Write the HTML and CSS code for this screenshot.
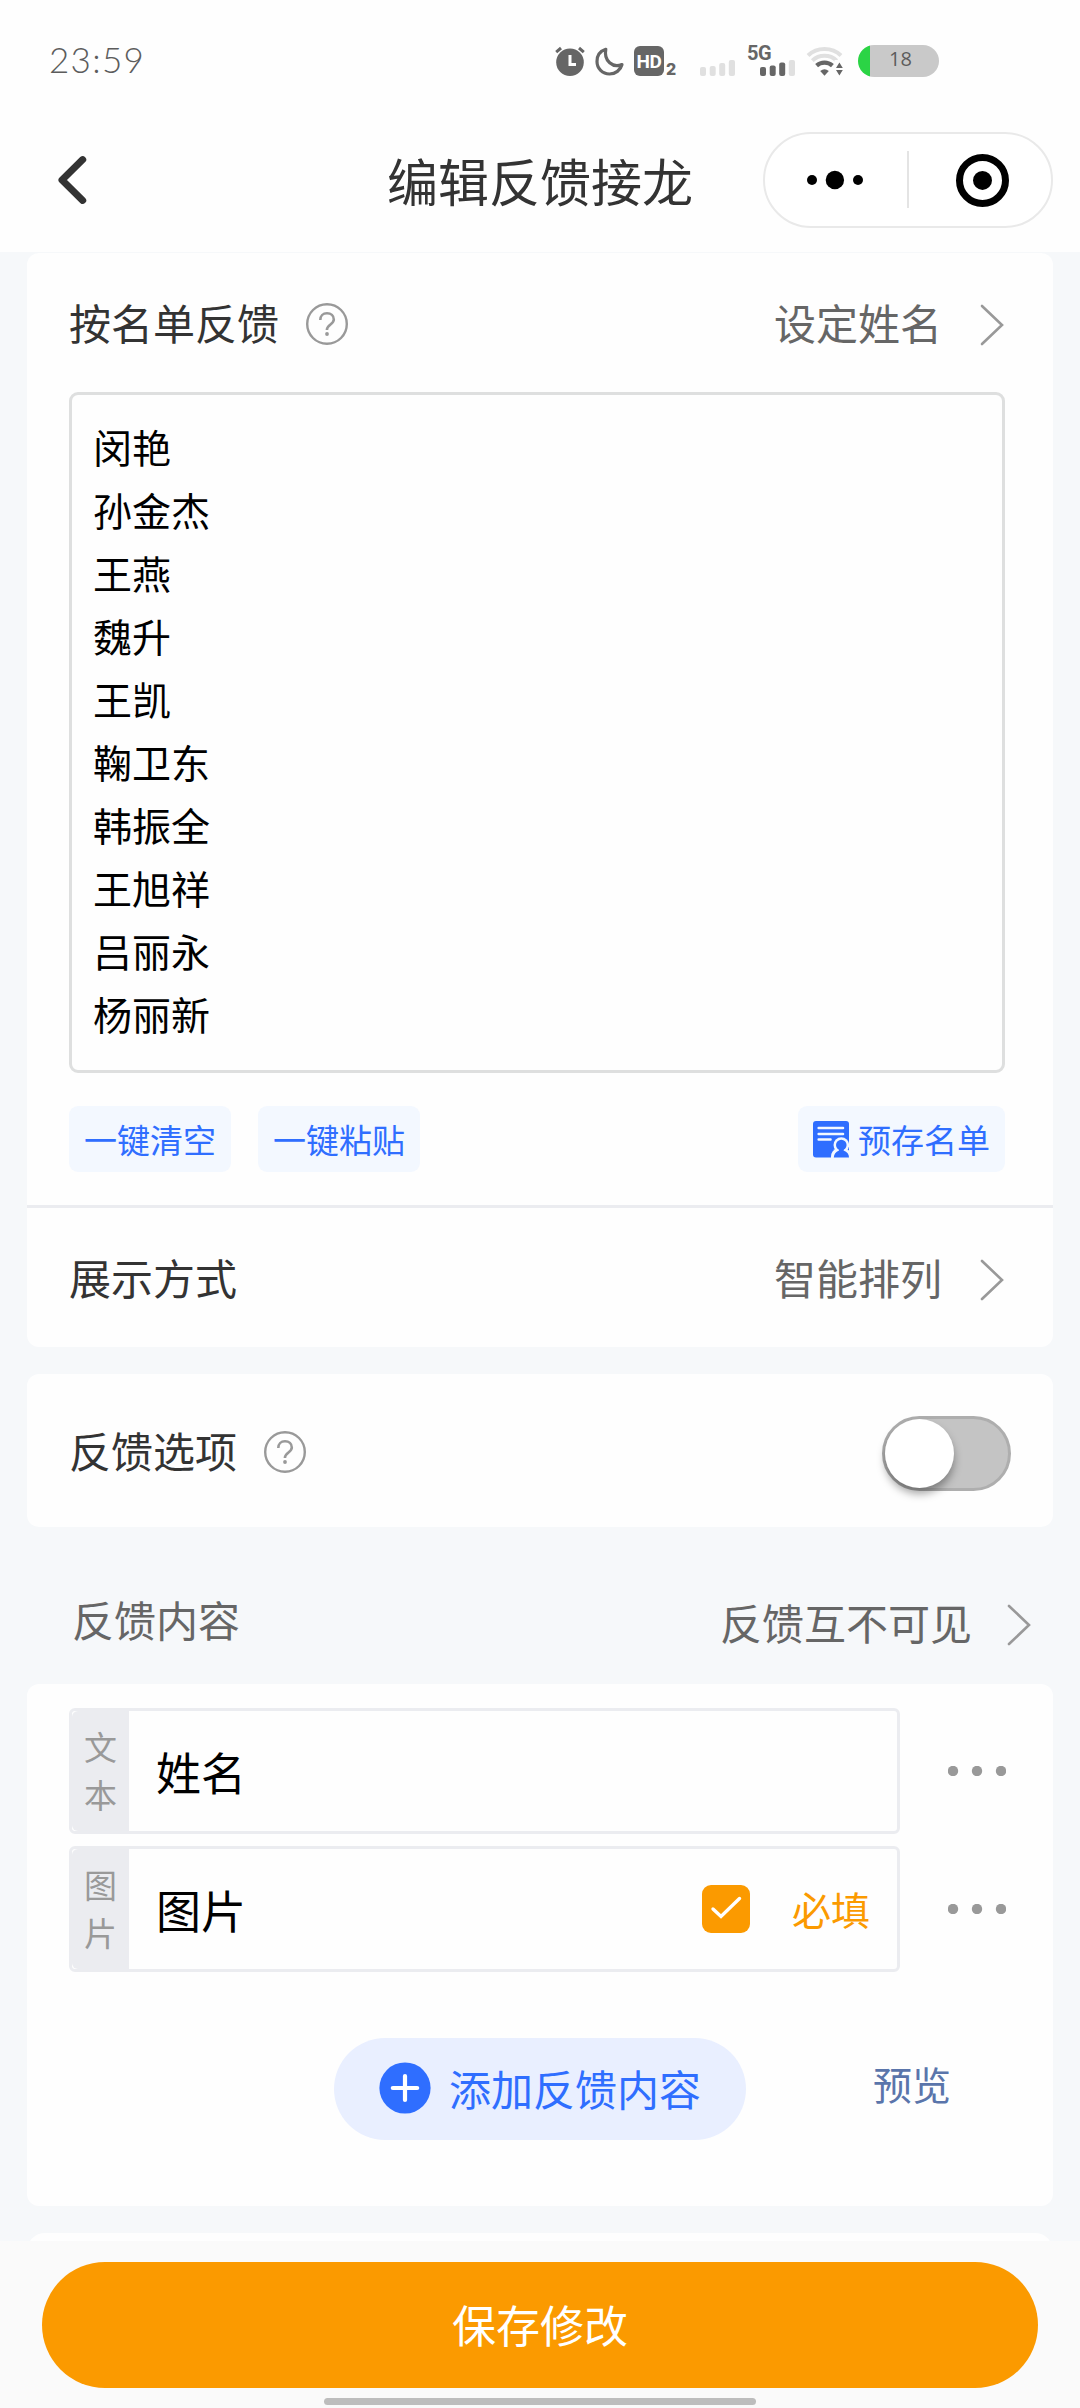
FILE: index.html
```html
<!DOCTYPE html>
<html lang="zh-CN">
<head>
<meta charset="utf-8">
<title>编辑反馈接龙</title>
<link rel="stylesheet" href="styles.css">
</head>
<body>
<div class="page">
  <header class="status">
    <span class="clock">23:59</span>
    <div class="indicators">
      <svg class="ic-alarm" width="30" height="32" viewBox="0 0 30 32"><circle cx="15" cy="17.3" r="13.8" fill="#666"/><path d="M1.2 7.2 6 3M28.8 7.2 24 3" stroke="#666" stroke-width="3"/><path d="M15 10v9.5h6" fill="none" stroke="#fff" stroke-width="3"/></svg>
      <svg class="ic-moon" width="29" height="32" viewBox="0 0 29 32"><path d="M10.800 4.300C5.500 6 2 10.500 2 16.500C2 23.500 7.500 29 14.500 29C20.500 29 25.500 25.200 27 19.500C18 23.500 8.500 16 10.800 4.300Z" fill="none" stroke="#666" stroke-width="3.200" stroke-linejoin="round"/></svg>
      <span class="hd">HD</span>
      <span class="hd-sub">2</span>
      <svg class="ic-sim" width="36" height="32" viewBox="0 0 36 32" fill="#e0e0e0"><rect x="0" y="22" width="6" height="9" rx="2"/><rect x="9.7" y="21" width="6" height="10" rx="2"/><rect x="19.2" y="18" width="6" height="13" rx="2"/><rect x="28.8" y="15" width="6.2" height="16" rx="2"/></svg>
      <div class="sim5g">
        <span class="net">5G</span>
        <svg width="36" height="17" viewBox="0 0 36 17" fill="#666"><rect x="0" y="8" width="6" height="9" rx="2"/><rect x="9.7" y="6.5" width="6" height="10.5" rx="2"/><rect x="19.2" y="3.5" width="6" height="13.5" rx="2"/><rect x="28.8" y="1" width="6.2" height="16" rx="2" fill="#e0e0e0"/></svg>
      </div>
      <svg class="ic-wifi" width="38" height="32" viewBox="0 0 38 32" fill="none"><path d="M2 10.5C11 1.8 26 1.8 35 10.5M6.3 15.6C13 9.2 24 9.2 30.7 15.6" stroke="#e0e0e0" stroke-width="4"/><path d="M10.6 20.6C15 16.6 22 16.6 26.4 20.6" stroke="#666" stroke-width="4.2"/><path d="M14.2 26Q18.5 22.4 22.8 26L18.5 30.7Z" fill="#666"/><rect x="28.5" y="15" width="9.5" height="17" fill="#fefefe"/><path d="M30 23 33.4 17.4 36.8 23ZM30 25 36.8 25 33.4 30.4Z" fill="#666"/></svg>
      <span class="battery">18</span>
    </div>
  </header>

  <nav class="nav">
    <svg class="back" width="32" height="52" viewBox="0 0 32 52"><path d="M26.7 5.6 6 26 26.7 46.4" fill="none" stroke="#333" stroke-width="7" stroke-linecap="round" stroke-linejoin="round"/></svg>
    <h1 class="title">编辑反馈接龙</h1>
    <div class="capsule">
      <svg width="290" height="96" viewBox="0 0 290 96"><rect x="1" y="1" width="288" height="94" rx="47" fill="#fff" stroke="#e9e9e9" stroke-width="2"/><circle cx="49" cy="48" r="5"/><circle cx="71.9" cy="48" r="9.2"/><circle cx="95" cy="48" r="5"/><path d="M145 19v57" stroke="#dedede" stroke-width="1.6"/><circle cx="219.5" cy="48.4" r="23" fill="none" stroke="#000" stroke-width="7"/><circle cx="219.5" cy="48.4" r="9.5"/></svg>
    </div>
  </nav>

  <main class="content">
    <section class="card">
      <div class="row">
        <span class="label">按名单反馈</span>
        <svg class="help" width="42" height="42" viewBox="0 0 42 42" fill="none" stroke="#999"><circle cx="21" cy="21" r="19.8" stroke-width="2.4"/><path d="M14.3 17C14.3 12.800 17 10.300 21 10.300S27.800 12.800 27.800 16.500C27.800 21.500 20.900 21.500 20.900 27" stroke-width="2.600"/><circle cx="21" cy="31" r="1.900" fill="#999" stroke="none"/></svg>
        <span class="value">设定姓名</span>
        <svg class="chev" width="25" height="42" viewBox="0 0 25 42"><path d="M2 2 22 21 2 40" fill="none" stroke="#999" stroke-width="2.600" stroke-linecap="round"/></svg>
      </div>
      <div class="names">闵艳
孙金杰
王燕
魏升
王凯
鞠卫东
韩振全
王旭祥
吕丽永
杨丽新</div>
      <div class="chips">
        <span class="chip">一键清空</span>
        <span class="chip">一键粘贴</span>
        <span class="chip chip-right">
          <svg width="36" height="37" viewBox="0 0 36 37"><rect width="36" height="36.500" rx="3" fill="#2f6eff"/><path d="M5.600 7h24.500M5.600 13h24.500M5.600 18.500h12" stroke="#f3f8ff" stroke-width="2.400" stroke-linecap="round"/><circle cx="28.300" cy="24" r="7.800" fill="#f3f8ff"/><path d="M18 37Q17.500 29 25 27h7l5 3v7Z" fill="#f3f8ff"/><circle cx="28.300" cy="24" r="5.300" fill="#2f6eff"/><path d="M20.800 36.500Q21 31.500 26 29.500v-3h4.600v3Q36 31.500 36 36.500Z" fill="#2f6eff"/></svg>
          预存名单
        </span>
      </div>
      <div class="row row-line">
        <span class="label">展示方式</span>
        <span class="value">智能排列</span>
        <svg class="chev" width="25" height="42" viewBox="0 0 25 42"><path d="M2 2 22 21 2 40" fill="none" stroke="#999" stroke-width="2.600" stroke-linecap="round"/></svg>
      </div>
    </section>

    <section class="card card-options">
      <div class="row row-options">
        <span class="label">反馈选项</span>
        <svg class="help" width="42" height="42" viewBox="0 0 42 42" fill="none" stroke="#999"><circle cx="21" cy="21" r="19.8" stroke-width="2.4"/><path d="M14.3 17C14.3 12.800 17 10.300 21 10.300S27.800 12.800 27.800 16.500C27.800 21.500 20.900 21.500 20.900 27" stroke-width="2.600"/><circle cx="21" cy="31" r="1.900" fill="#999" stroke="none"/></svg>
        <span class="toggle"><span class="knob"></span></span>
      </div>
    </section>

    <div class="section-head">
      <span class="section-name">反馈内容</span>
      <span class="section-value">反馈互不可见</span>
      <svg class="chev" width="25" height="42" viewBox="0 0 25 42"><path d="M2 2 22 21 2 40" fill="none" stroke="#999" stroke-width="2.600" stroke-linecap="round"/></svg>
    </div>

    <section class="card card-fields">
      <div class="field-row">
        <div class="field"><span class="tag">文本</span><span class="field-name">姓名</span></div>
        <svg class="more" width="58" height="10" viewBox="0 0 58 10" fill="#999"><circle cx="5" cy="5" r="5.200"/><circle cx="29" cy="5" r="5.200"/><circle cx="53" cy="5" r="5.200"/></svg>
      </div>
      <div class="field-row">
        <div class="field">
          <span class="tag">图片</span><span class="field-name">图片</span>
          <svg class="check" width="48" height="48" viewBox="0 0 48 48"><rect width="48" height="48" rx="9" fill="#fb9a00"/><path d="M11 24 19 31.500 37.500 13.500" fill="none" stroke="#fff" stroke-width="3.400" stroke-linecap="round"/></svg>
          <span class="required">必填</span>
        </div>
        <svg class="more" width="58" height="10" viewBox="0 0 58 10" fill="#999"><circle cx="5" cy="5" r="5.200"/><circle cx="29" cy="5" r="5.200"/><circle cx="53" cy="5" r="5.200"/></svg>
      </div>
      <div class="actions">
        <span class="add">
          <svg width="52" height="52" viewBox="0 0 52 52"><circle cx="26" cy="26" r="25.600" fill="#2f6eff"/><path d="M26 14v24M13.800 26h24.400" stroke="#fff" stroke-width="4.200" stroke-linecap="round"/></svg>
          添加反馈内容
        </span>
        <span class="preview">预览</span>
      </div>
    </section>

    <section class="card card-next"></section>
  </main>

  <footer class="footer">
    <button class="save">保存修改</button>
    <div class="home-bar"></div>
  </footer>
</div>
</body>
</html>
```
FILE: styles.css
```css
* { box-sizing: border-box; }
body {
  margin: 0;
  font-family: "Noto Sans CJK SC", sans-serif;
  font-weight: 400;
  background: #f6f8fa;
}
svg { display: block; flex: none; }
.page {
  width: 1080px;
  height: 2408px;
  display: flex;
  flex-direction: column;
  overflow: hidden;
}

/* status bar */
.status {
  height: 120px;
  flex: none;
  background: #fefefe;
  display: flex;
  padding: 45px 141px 0 49px;
  justify-content: space-between;
}
.clock {
  font: 300 35px/28px Lato, sans-serif;
  color: #5c5c5c;
  letter-spacing: 1.3px;
}
.indicators { display: flex; height: 32px; }
.hd {
  width: 30px;
  height: 30px;
  margin: 1px 2px 0 10px;
  border-radius: 6px;
  background: #666;
  color: #fff;
  font: 700 19px/31px Roboto, sans-serif;
  text-align: center;
  letter-spacing: -0.5px;
}
.ic-moon { margin-left: 10px; }
.hd-sub {
  width: 11px;
  font: 800 16px/16px Inter, sans-serif;
  color: #666;
  margin-top: 16px;
}
.ic-sim { margin-left: 23px; }
.sim5g {
  width: 49px;
  margin-left: 11px;
  display: flex;
  flex-direction: column;
  align-items: flex-end;
}
.net {
  align-self: flex-start;
  height: 14px;
  font: 700 20px/17px Roboto, sans-serif;
  color: #666;
  letter-spacing: -0.5px;
}
.ic-wifi { margin-left: 10px; }
.battery {
  width: 81px;
  height: 32px;
  margin-left: 14px;
  border-radius: 16px;
  background: linear-gradient(90deg, #2bd445 12px, #c9c9c9 12px);
  font: 400 20px/28px "Open Sans", sans-serif;
  color: #5c5c5c;
  text-align: center;
  padding-left: 4px;
}

/* navigation bar */
.nav {
  height: 132px;
  flex: none;
  background: #fefefe;
  display: grid;
  grid-template-columns: 290px 1fr 290px;
  padding: 12px 27px 0;
}
.back { margin: 22px 0 0 29px; }
.title {
  margin: 0;
  font-size: 51px;
  line-height: 97px;
  font-weight: 400;
  text-align: center;
  color: #333;
  white-space: nowrap;
}

/* cards */
.content {
  height: 1989px;
  flex: none;
  overflow: hidden;
  background: #f6f8fa;
  padding: 1px 27px 0;
}
.card { background: #fefefe; border-radius: 12px; }
.row {
  height: 139px;
  display: flex;
  align-items: center;
  padding: 0 48px 0 42px;
  font-size: 42px;
  line-height: 60px;
}
.label, .value { margin-bottom: 2px; }
.label { color: #333; }
.help { margin: 3px 0 0 27px; }
.value { color: #666; margin-left: auto; }
.chev { margin: 5px 0 0 38px; }
.row-line { height: 142px; border-top: 3px solid #ebecf0; }

.names {
  margin: 0 48px 0 42px;
  height: 681px;
  border: 3px solid #dedfdf;
  border-radius: 9px;
  padding: 20px 21px;
  font-size: 39px;
  line-height: 63px;
  color: #000;
  white-space: pre;
}
.chips {
  display: flex;
  gap: 27px;
  padding: 33px 48px 33px 42px;
}
.chip {
  height: 66px;
  padding: 0 15px;
  border-radius: 9px;
  background: #f3f8ff;
  color: #2f6eff;
  font-size: 33px;
  line-height: 66px;
  display: flex;
  align-items: center;
  gap: 9px;
}
.chip-right { margin-left: auto; }

.card-options { margin-top: 27px; }
.row-options { height: 153px; padding-right: 42px; }
.toggle {
  width: 129px;
  height: 75px;
  margin: 6px 0 0 auto;
  border: 3px solid #aeaeae;
  border-radius: 38px;
  background: #c4c4c4;
}
.knob {
  display: block;
  width: 69px;
  height: 69px;
  border-radius: 50%;
  background: #fff;
  box-shadow: 0 6px 9px rgba(0, 0, 0, 0.35);
}

.section-head {
  height: 157px;
  display: flex;
  padding: 62px 21px 0 45px;
  font-size: 42px;
  line-height: 60px;
  color: #666;
}
.section-value { margin: 3px 0 0 auto; }
.section-head .chev { margin: 15px 0 0 35px; }

/* form fields */
.card-fields {
  height: 522px;
  padding: 24px 48px 0 42px;
}
.field-row {
  display: flex;
  align-items: center;
  justify-content: space-between;
  margin-bottom: 12px;
}
.field {
  width: 831px;
  height: 126px;
  border: 3px solid #ebecf0;
  border-radius: 6px;
  display: flex;
  align-items: center;
}
.tag {
  width: 57px;
  height: 120px;
  padding: 11px 12px 0;
  border-radius: 6px 0 0 6px;
  background: #ebecf0;
  color: #999;
  font-size: 33px;
  line-height: 48px;
  word-break: break-all;
}
.field-name {
  margin: 2px 0 0 27px;
  font-size: 45px;
  line-height: 60px;
  color: #000;
}
.check { margin-left: auto; }
.required {
  margin: 0 27px 2px 42px;
  font-size: 39px;
  line-height: 56px;
  color: #fb9a00;
}
.more { margin-right: -1px; }

.actions {
  display: flex;
  margin: 66px 0 0 265px;
}
.add {
  width: 412px;
  height: 102px;
  padding: 0 0 2px 45px;
  border-radius: 51px;
  background: #e9efff;
  color: #2f6eff;
  font-size: 42px;
  line-height: 100px;
  display: flex;
  align-items: center;
  gap: 18px;
}
.preview {
  margin-left: 127px;
  font-size: 39px;
  line-height: 91px;
  color: #5a75ab;
}
.card-next { margin-top: 27px; height: 60px; border-radius: 18px; }

/* bottom bar */
.footer {
  height: 167px;
  flex: none;
  background: #fafafa;
  padding: 21px 42px 0;
}
.save {
  display: block;
  width: 100%;
  height: 126px;
  border: 0;
  border-radius: 63px;
  padding: 0 0 3px;
  background: #fb9a00;
  color: #fff;
  font: 400 44px/120px KaiTi, "Noto Sans CJK SC", sans-serif;
}
.home-bar {
  width: 432px;
  height: 7px;
  margin: 10px auto 0;
  border-radius: 4px;
  background: #bdbdbd;
}
```
